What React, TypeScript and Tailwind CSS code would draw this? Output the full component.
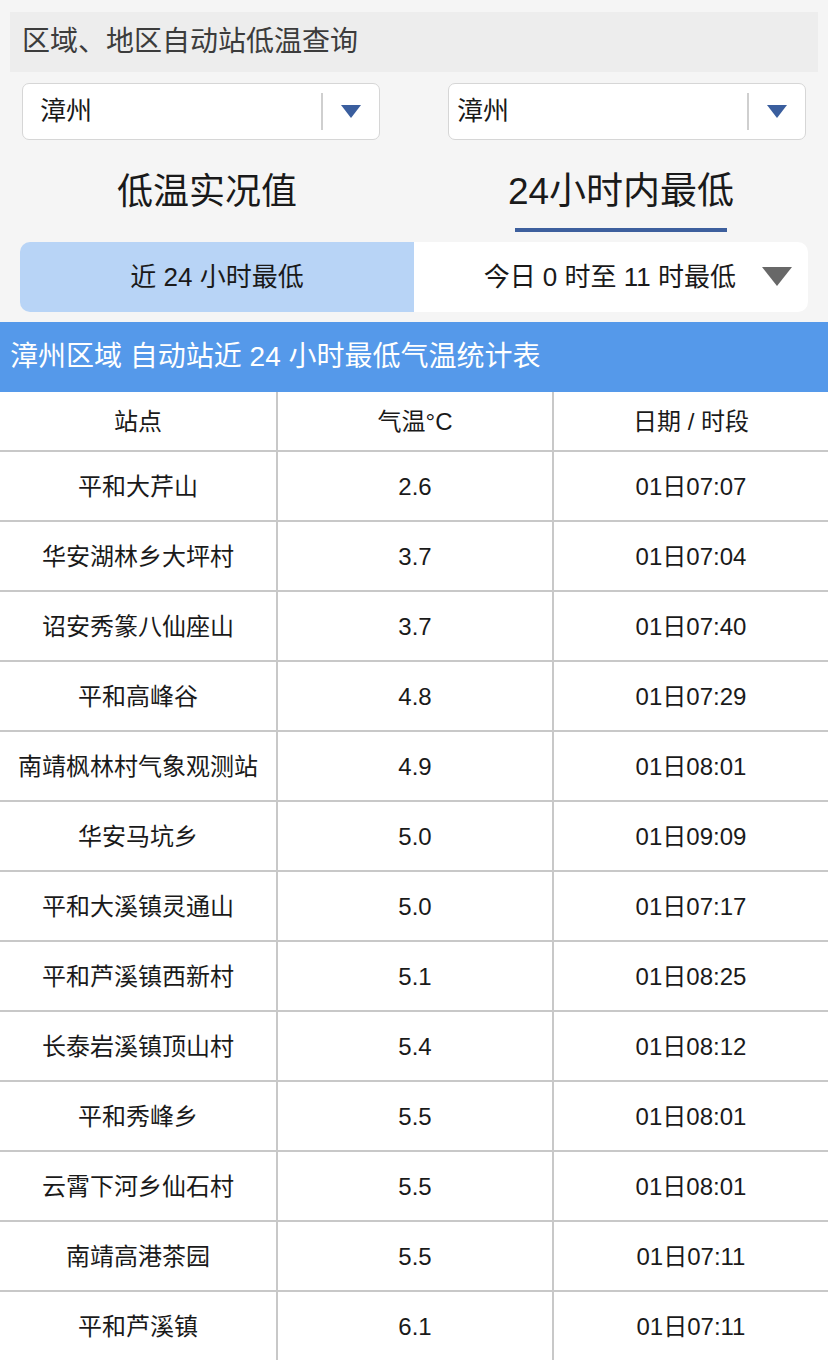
import React from "react";

const rows: [string, string, string][] = [
  ["平和大芹山", "2.6", "01日07:07"],
  ["华安湖林乡大坪村", "3.7", "01日07:04"],
  ["诏安秀篆八仙座山", "3.7", "01日07:40"],
  ["平和高峰谷", "4.8", "01日07:29"],
  ["南靖枫林村气象观测站", "4.9", "01日08:01"],
  ["华安马坑乡", "5.0", "01日09:09"],
  ["平和大溪镇灵通山", "5.0", "01日07:17"],
  ["平和芦溪镇西新村", "5.1", "01日08:25"],
  ["长泰岩溪镇顶山村", "5.4", "01日08:12"],
  ["平和秀峰乡", "5.5", "01日08:01"],
  ["云霄下河乡仙石村", "5.5", "01日08:01"],
  ["南靖高港茶园", "5.5", "01日07:11"],
  ["平和芦溪镇", "6.1", "01日07:11"],
];

const font = {
  fontFamily: '"Liberation Sans", "Noto Sans CJK SC", sans-serif',
};

function Select({ pad }: { pad: string }) {
  return (
    <div className="w-[358px] h-[57px] bg-white rounded-[7px] border border-[#d6d6d6] flex items-center">
      <div className={`flex-1 ${pad} text-[26px] text-[#1a1a1a]`}>漳州</div>
      <div className="w-[2px] h-[37px] bg-[#cfcfcf]" />
      <div className="w-[56px] flex items-center justify-center">
        <svg width="20" height="14" viewBox="0 0 20 14">
          <polygon points="0,0 20,0 10,13" fill="#3a5e9e" />
        </svg>
      </div>
    </div>
  );
}

export default function App() {
  return (
    <div className="w-[828px] h-[1360px] bg-[#f5f5f5] overflow-hidden" style={font}>
      <div className="pt-[12px] px-[10px]">
        <div className="h-[60px] bg-[#ededed] flex items-center pl-[12px] text-[28px] text-[#3c3c3c]">
          区域、地区自动站低温查询
        </div>
      </div>
      <div className="flex justify-between px-[22px] mt-[11px]">
        <Select pad="pl-[17px]" />
        <Select pad="pl-[8px]" />
      </div>
      <div className="grid grid-cols-2 h-[102px]">
        <div className="flex flex-col items-center pt-[30px]">
          <div className="text-[36px] leading-[44px] text-[#1a1a1a]">低温实况值</div>
        </div>
        <div className="flex flex-col items-center pt-[30px]">
          <div className="text-[37px] leading-[44px] text-[#1a1a1a]">24小时内最低</div>
          <div className="w-[212px] h-[4px] bg-[#3d5f9d] mt-[14px]" />
        </div>
      </div>
      <div className="mx-[20px] h-[70px] flex rounded-[10px] overflow-hidden">
        <div className="w-[394px] bg-[#b8d4f6] flex items-center justify-center text-[26px] text-[#1a1a1a]">
          近 24 小时最低
        </div>
        <div className="flex-1 bg-white flex items-center justify-end pr-[16px] text-[26px] text-[#1a1a1a]">
          <span className="mr-[26px]">今日 0 时至 11 时最低</span>
          <svg width="30" height="20" viewBox="0 0 30 20">
            <polygon points="0,0 30,0 15,19" fill="#686868" />
          </svg>
        </div>
      </div>
      <div className="mt-[10px] h-[70px] bg-[#5599ea] flex items-center pl-[10px] text-[28px] text-white">
        漳州区域 自动站近 24 小时最低气温统计表
      </div>
      <div className="bg-white">
        <div className="grid grid-cols-[278px_276px_1fr] h-[60px] border-b-2 border-[#c8c8c8] text-[24px] text-[#1a1a1a]">
          <div className="flex items-center justify-center pt-[2px] border-r-2 border-[#c8c8c8]">站点</div>
          <div className="flex items-center justify-center pt-[2px] border-r-2 border-[#c8c8c8]">气温°C</div>
          <div className="flex items-center justify-center pt-[2px]">日期 / 时段</div>
        </div>
        {rows.map((r, i) => (
          <div
            key={i}
            className="grid grid-cols-[278px_276px_1fr] h-[70px] border-b-2 border-[#c8c8c8] text-[24px] text-[#1a1a1a]"
          >
            <div className="flex items-center justify-center pt-[2px] border-r-2 border-[#c8c8c8]">{r[0]}</div>
            <div className="flex items-center justify-center pt-[2px] border-r-2 border-[#c8c8c8]">{r[1]}</div>
            <div className="flex items-center justify-center pt-[2px]">{r[2]}</div>
          </div>
        ))}
      </div>
    </div>
  );
}
